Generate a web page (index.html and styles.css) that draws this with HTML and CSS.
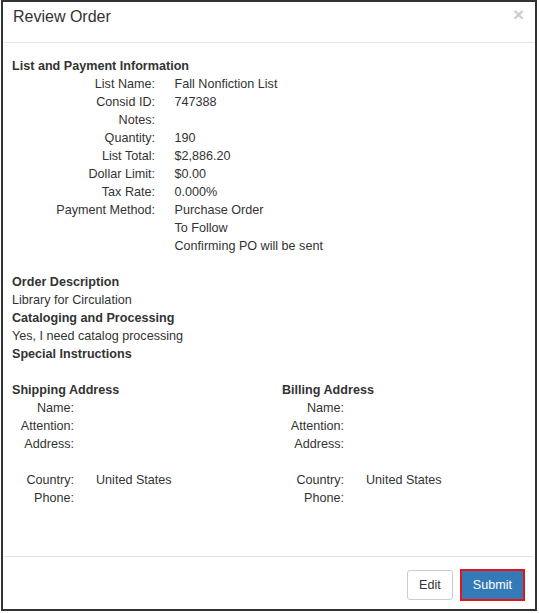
FILE: index.html
```html
<!DOCTYPE html>
<html lang="en">
<head>
    <meta charset="UTF-8">
    <meta name="viewport" content="width=device-width, initial-scale=1.0">
    <title>Review Order</title>
    <link rel="stylesheet" href="styles.css">
</head>
<body>
    <div class="modal">
        <div class="modal-header">
            <h4 class="modal-title">Review Order</h4>
            <span class="close">&times;</span>
        </div>

        <div class="modal-body">
            <div class="section">
                <h5>List and Payment Information</h5>
                <div class="info">
                    <span class="label">List Name:</span>
                    <span class="value">Fall Nonfiction List</span>
                    <span class="label">Consid ID:</span>
                    <span class="value">747388</span>
                    <span class="label">Notes:</span>
                    <span class="value"></span>
                    <span class="label">Quantity:</span>
                    <span class="value">190</span>
                    <span class="label">List Total:</span>
                    <span class="value">$2,886.20</span>
                    <span class="label">Dollar Limit:</span>
                    <span class="value">$0.00</span>
                    <span class="label">Tax Rate:</span>
                    <span class="value">0.000%</span>
                    <span class="label">Payment Method:</span>
                    <span class="value">Purchase Order<br>To Follow<br>Confirming PO will be sent</span>
                </div>
            </div>

            <div class="section">
                <h5>Order Description</h5>
                <p>Library for Circulation</p>
                <h5>Cataloging and Processing</h5>
                <p>Yes, I need catalog processing</p>
                <h5>Special Instructions</h5>
                <p></p>
            </div>

            <div class="section addresses">
                <div class="address">
                    <h5>Shipping Address</h5>
                    <div class="addr-info">
                        <span class="label">Name:</span>
                        <span class="value"></span>
                        <span class="label">Attention:</span>
                        <span class="value"></span>
                        <span class="label">Address:</span>
                        <span class="value addr-lines"></span>
                        <span class="label">Country:</span>
                        <span class="value">United States</span>
                        <span class="label">Phone:</span>
                        <span class="value"></span>
                    </div>
                </div>
                <div class="address">
                    <h5>Billing Address</h5>
                    <div class="addr-info">
                        <span class="label">Name:</span>
                        <span class="value"></span>
                        <span class="label">Attention:</span>
                        <span class="value"></span>
                        <span class="label">Address:</span>
                        <span class="value addr-lines"></span>
                        <span class="label">Country:</span>
                        <span class="value">United States</span>
                        <span class="label">Phone:</span>
                        <span class="value"></span>
                    </div>
                </div>
            </div>
        </div>

        <div class="modal-footer">
            <button class="btn btn-default">Edit</button>
            <button class="btn btn-primary">Submit</button>
        </div>
    </div>
</body>
</html>
```

FILE: styles.css
```css
* {
    margin: 0;
    padding: 0;
    box-sizing: border-box;
}

body {
    font-family: 'Liberation Sans', Arial, sans-serif;
    font-size: 12.6px;
    line-height: 18px;
    color: #333;
    background: #fff;
}

.modal {
    margin-left: 1px;
    width: 536px;
    height: 611px;
    border: 2px solid #333;
    display: flex;
    flex-direction: column;
}

.modal-header {
    display: flex;
    justify-content: space-between;
    align-items: flex-start;
    padding: 3px 10px 13px 9px;
    margin: 0 1px;
    border-bottom: 1px solid #e5e5e5;
}

.modal-title {
    font-size: 16px;
    font-weight: normal;
    line-height: 24px;
}

.close {
    font-size: 19px;
    font-weight: bold;
    line-height: 19px;
    color: #000;
    opacity: 0.2;
}

.modal-body {
    flex: 1;
    padding: 14px 9px 0;
}

.section {
    margin-bottom: 18px;
}

h5 {
    font-size: 12.6px;
    font-weight: bold;
    line-height: 18px;
}

.info {
    display: grid;
    grid-template-columns: 143px 1fr;
    column-gap: 19.5px;
}

.label {
    text-align: right;
}

.addresses {
    display: grid;
    grid-template-columns: 270px 1fr;
}

.addr-info {
    display: grid;
    grid-template-columns: 62px 1fr;
    column-gap: 22px;
}

.addr-lines {
    min-height: 36px;
}

.modal-footer {
    display: flex;
    justify-content: flex-end;
    align-items: center;
    gap: 7px;
    margin: 0 1px;
    padding: 12px 9px 8px;
    border-top: 1px solid #e5e5e5;
}

.btn {
    font-family: inherit;
    font-size: 12.6px;
    line-height: 18px;
    border-radius: 3px;
    cursor: pointer;
}

.btn-default {
    padding: 5px 11px;
    background: #fff;
    color: #333;
    border: 1px solid #ccc;
}

.btn-primary {
    padding: 5px 11px;
    background: #337ab7;
    color: #fff;
    border: 2px solid #e3151c;
    border-radius: 0;
}
```
